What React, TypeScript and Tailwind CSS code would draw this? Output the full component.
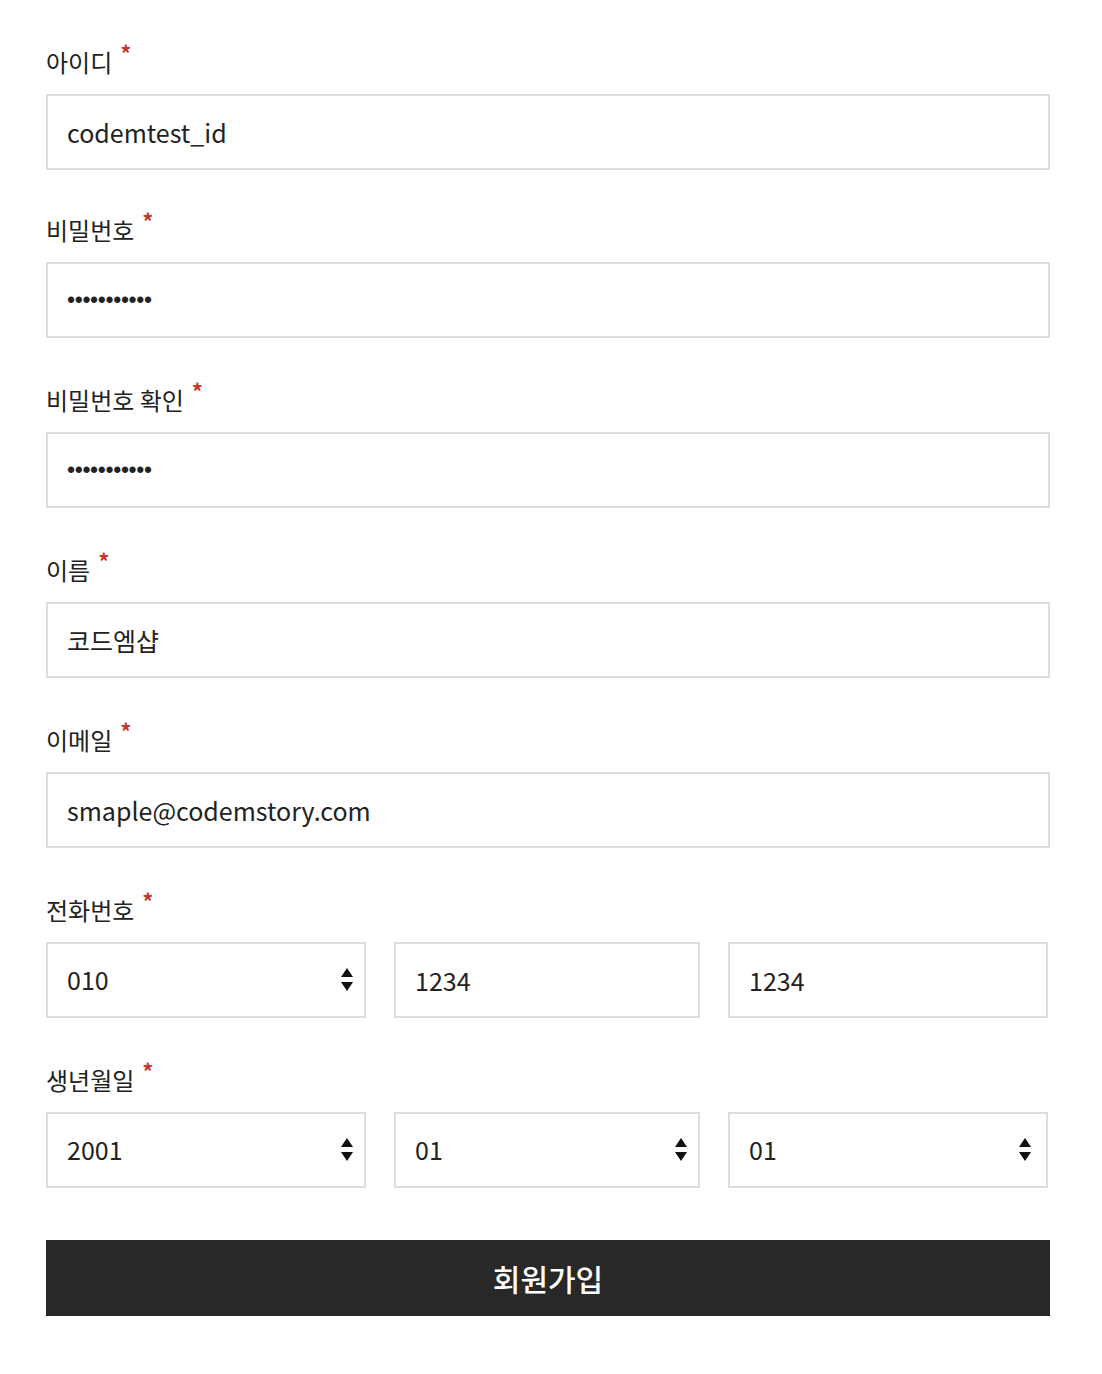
import { ReactNode } from "react";

const font = "font-['Noto_Sans_CJK_KR','Noto_Sans',sans-serif]";

function Label({ children }: { children: ReactNode }) {
  return (
    <label className="flex items-start text-[24px] leading-[36px] text-[#222] mb-[14px]">
      {children}
      <span className="ml-[8px] text-[#c8372d] text-[22px] leading-none relative -top-[3px] font-bold">
        *
      </span>
    </label>
  );
}

function TextBox({ value, className = "w-full" }: { value: string; className?: string }) {
  return (
    <input
      readOnly
      defaultValue={value}
      className={`${className} h-[76px] border-2 border-[#dcdcdc] bg-white px-[19px] text-[25px] text-[#222] outline-none ${font}`}
    />
  );
}

function Dots() {
  return (
    <div className="w-full h-[76px] border-2 border-[#dcdcdc] bg-white px-[19px] flex items-center">
      <span className="font-['Liberation_Sans',sans-serif] text-[23px] tracking-[-0.35px] text-[#222] leading-none">
        •••••••••••
      </span>
    </div>
  );
}

function Arrows({ right }: { right: string }) {
  return (
    <svg width="14" height="28" viewBox="0 0 14 28" className={`pointer-events-none absolute ${right} top-1/2 -translate-y-1/2`}>
      <path d="M7 2 L13 11 L1 11 Z" fill="#111" />
      <path d="M1 16 L13 16 L7 25 Z" fill="#111" />
    </svg>
  );
}

function SelectBox({ value, className, right = "right-[12px]" }: { value: string; className: string; right?: string }) {
  return (
    <div className={`relative ${className}`}>
      <select
        defaultValue={value}
        className={`appearance-none w-full h-[76px] border-2 border-[#dcdcdc] rounded-none bg-white px-[19px] text-[25px] text-[#222] outline-none ${font}`}
      >
        <option value={value}>{value}</option>
      </select>
      <Arrows right={right} />
    </div>
  );
}

export default function App() {
  return (
    <div className={`min-h-screen bg-white px-[46px] pt-[44px] ${font}`}>
      <form className="w-[1004px] flex flex-col">
        <div className="mb-[42px]">
          <Label>아이디</Label>
          <TextBox value="codemtest_id" />
        </div>
        <div className="mb-[44px]">
          <Label>비밀번호</Label>
          <Dots />
        </div>
        <div className="mb-[44px]">
          <Label>비밀번호 확인</Label>
          <Dots />
        </div>
        <div className="mb-[44px]">
          <Label>이름</Label>
          <TextBox value="코드엠샵" />
        </div>
        <div className="mb-[44px]">
          <Label>이메일</Label>
          <TextBox value="smaple@codemstory.com" />
        </div>
        <div className="mb-[44px]">
          <Label>전화번호</Label>
          <div className="flex gap-[28px]">
            <SelectBox value="010" className="w-[320px]" />
            <TextBox value="1234" className="w-[306px]" />
            <TextBox value="1234" className="w-[320px]" />
          </div>
        </div>
        <div className="mb-[52px]">
          <Label>생년월일</Label>
          <div className="flex gap-[28px]">
            <SelectBox value="2001" className="w-[320px]" />
            <SelectBox value="01" className="w-[306px]" />
            <SelectBox value="01" className="w-[320px]" right="right-[16px]" />
          </div>
        </div>
        <button
          type="button"
          className="w-full h-[76px] bg-[#282828] text-white text-[30px] font-medium"
        >
          회원가입
        </button>
      </form>
    </div>
  );
}
